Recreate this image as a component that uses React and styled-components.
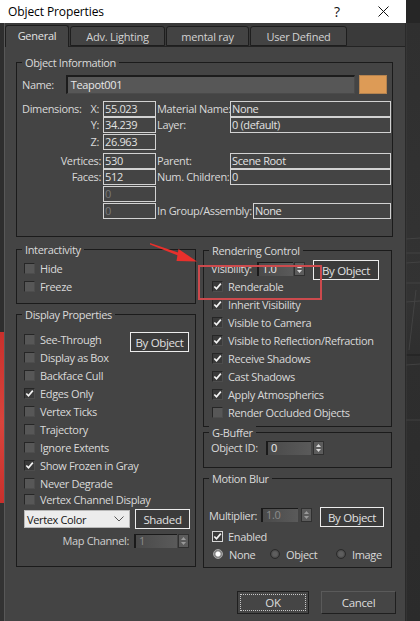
import React from 'react';
import styled, { createGlobalStyle } from 'styled-components';

const FONT = `"Open Sans", "Noto Sans", "DejaVu Sans", sans-serif`;

const Global = createGlobalStyle`
  html, body { margin: 0; padding: 0; background: #2c2c2c; }
  body { width: 420px; height: 621px; overflow: hidden; font-family: ${FONT}; }
  * { box-sizing: border-box; }
`;

const Screen = styled.div`
  position: relative;
  display: flex;
  width: 420px;
  height: 621px;
  overflow: hidden;
`;

const Dialog = styled.div`
  width: 406px;
  display: flex;
  flex-direction: column;
`;

const TitleBar = styled.div`
  height: 23px;
  background: #ffffff;
  display: flex;
  align-items: center;
  padding-left: 8px;
  color: #000;
  font-size: 12px;
  letter-spacing: -0.1px;
`;

const TitleText = styled.span`
  flex: 1;
`;

const TitleBtn = styled.div`
  width: 46px;
  height: 23px;
  display: flex;
  align-items: center;
  justify-content: center;
  font-size: 14px;
  color: #111;
`;

const Body = styled.div`
  flex: 1;
  display: flex;
`;

const LeftEdge = styled.div`
  width: 4px;
  background: linear-gradient(
    to bottom,
    #2e2e2e 0px,
    #2e2e2e 309px,
    #c9302c 309px,
    #d8443c 400px,
    #c9302c 480px,
    #333 480px,
    #333 100%
  );
`;

const Main = styled.div`
  flex: 1;
  display: flex;
  flex-direction: column;
  border-left: 1px solid #585858;
  border-right: 1px solid #2a2a2a;
  background: #444444;
`;

const TabStrip = styled.div`
  height: 24px;
  display: flex;
  align-items: flex-end;
  gap: 1px;
  background: #3a3a3a;
  border-bottom: 1px solid #232323;
`;

const Tab = styled.div`
  width: ${(p) => p.$w}px;
  height: ${(p) => (p.$active ? 22 : 20)}px;
  margin-bottom: ${(p) => (p.$active ? -1 : 0)}px;
  background: ${(p) => (p.$active ? '#444444' : '#434343')};
  border: 1px solid #1e1e1e;
  border-bottom: ${(p) => (p.$active ? 'none' : '1px solid #1e1e1e')};
  border-radius: 3px 3px 0 0;
  display: flex;
  align-items: center;
  justify-content: center;
  font-size: 11px;
  letter-spacing: -0.25px;
  color: ${(p) => (p.$active ? '#e2e2e2' : '#d2d2d2')};
  padding-bottom: ${(p) => (p.$active ? 2 : 0)}px;
`;

const Panel = styled.div`
  flex: 1;
  display: flex;
  flex-direction: column;
  padding: 14px 0 0 11px;
  color: #d9d9d9;
  font-size: 11px;
  letter-spacing: -0.35px;
`;

const Group = styled.div`
  width: ${(p) => p.$w}px;
  height: ${(p) => p.$h}px;
  margin-top: ${(p) => p.$mt || 0}px;
  border: 1px solid #1b1b1b;
  padding: 0 5px;
  display: flex;
  flex-direction: column;
`;

const Legend = styled.div`
  align-self: flex-start;
  margin-top: -8px;
  padding: 0 3px;
  background: #444444;
  line-height: 15px;
  color: #dadada;
`;

const NameRow = styled.div`
  display: flex;
  align-items: center;
  margin-top: 5px;
  height: 19px;
`;

const NameLabel = styled.span`
  width: 44px;
`;

const NameInput = styled.div`
  width: 291px;
  height: 19px;
  background: #575757;
  border-top: 2px solid #1c1c1c;
  border-left: 2px solid #1c1c1c;
  border-bottom: 1px solid #4a4a4a;
  border-right: 1px solid #4a4a4a;
  padding-left: 3px;
  line-height: 16px;
  color: #e8e8e8;
`;

const Swatch = styled.div`
  width: 28px;
  height: 19px;
  margin-left: 4px;
  background: #dd9b56;
  border: 1px solid #b5834f;
`;

const InfoGrid = styled.div`
  margin-top: 7px;
  display: grid;
  grid-template-columns: 81px 53px 74px 161px;
  grid-template-rows: 16px 17px 19px 16px 17px 17px 16px;
  align-items: start;
`;

const RowLabel = styled.div`
  line-height: 16px;
  display: flex;
  justify-content: ${(p) => (p.$split ? 'space-between' : 'flex-end')};
  padding-right: ${(p) => (p.$pr != null ? p.$pr : 4)}px;
`;

const MidLabel = styled.div`
  line-height: 16px;
  padding-left: 1px;
  white-space: nowrap;
`;

const Field = styled.div`
  height: 16px;
  width: ${(p) => (p.$w ? `${p.$w}px` : 'auto')};
  margin-left: ${(p) => (p.$push ? 'auto' : '0')};
  border: 1px solid #d2d2d2;
  padding-left: 1px;
  line-height: 14px;
  color: ${(p) => (p.$dim ? '#7a7a7a' : '#e2e2e2')};
  white-space: nowrap;
  overflow: hidden;
`;

const GroupAssembly = styled.div`
  grid-column: 3 / 5;
  display: flex;
  align-items: flex-start;
`;

const Columns = styled.div`
  display: flex;
  gap: 7px;
  margin-top: 12px;
`;

const Col = styled.div`
  display: flex;
  flex-direction: column;
  width: ${(p) => p.$w}px;
  padding-top: ${(p) => p.$pt || 0}px;
`;

const CheckRow = styled.div`
  display: flex;
  align-items: center;
  gap: 5px;
  height: ${(p) => p.$h || 18}px;
  margin-top: ${(p) => p.$mt || 0}px;
  padding-left: ${(p) => p.$pl || 0}px;
  white-space: nowrap;
`;

const Box = styled.div`
  width: 11px;
  height: 11px;
  flex: none;
  display: flex;
  align-items: center;
  justify-content: center;
  background: ${(p) => (p.$checked ? '#3a3a3a' : '#575757')};
  border: 1px solid ${(p) => (p.$focus ? '#d6d6d6' : '#262626')};
  border-right-color: ${(p) => (p.$focus ? '#d6d6d6' : '#4d4d4d')};
  border-bottom-color: ${(p) => (p.$focus ? '#d6d6d6' : '#4d4d4d')};
`;

const Check = ({ checked, focus }) => (
  <Box $checked={checked} $focus={focus}>
    {checked && (
      <svg width="9" height="9" viewBox="0 0 9 9">
        <path d="M1.3 4.5 L3.5 6.8 L7.8 1.6" fill="none" stroke="#f4f4f4" strokeWidth="1.7" />
      </svg>
    )}
  </Box>
);

const CheckItem = ({ label, checked, focus, ...rest }) => (
  <CheckRow {...rest}>
    <Check checked={checked} focus={focus} />
    <span>{label}</span>
  </CheckRow>
);

const TopRow = styled.div`
  display: flex;
  justify-content: space-between;
  align-items: flex-start;
  height: 18px;
  margin-top: ${(p) => p.$mt || 0}px;
  padding-right: 1px;
`;

const Button = styled.div`
  width: ${(p) => p.$w}px;
  height: 20px;
  margin-top: ${(p) => p.$mt || 0}px;
  margin-left: ${(p) => p.$ml || 0}px;
  flex: none;
  border: 1px solid #ececec;
  background: #3b3b3b;
  display: flex;
  align-items: center;
  justify-content: center;
  color: #e0e0e0;
  font-size: 11.5px;
`;

const ComboRow = styled.div`
  display: flex;
  align-items: center;
  gap: 5px;
  height: 20px;
  margin-top: 3px;
  padding-left: 2px;
`;

const Combo = styled.div`
  width: 106px;
  height: 18px;
  background: #ececec;
  border: 1px solid #b8b8b8;
  color: #141414;
  display: flex;
  align-items: center;
  justify-content: space-between;
  padding: 0 5px 0 2px;
`;

const MapRow = styled.div`
  display: flex;
  align-items: center;
  height: 15px;
  margin-top: 4px;
  padding-left: 2px;
`;

const MapLabel = styled.span`
  width: 110px;
  text-align: right;
  padding-right: 5px;
  color: #cfcfcf;
`;

const SpinWrap = styled.div`
  display: flex;
  align-items: center;
  gap: ${(p) => p.$gap || 1}px;
  margin-top: ${(p) => p.$mt || 0}px;
  flex: none;
`;

const SpinField = styled.div`
  width: ${(p) => p.$w}px;
  height: 14px;
  background: linear-gradient(to right, #4a4a4a, #5a5a5a);
  border-top: 1px solid #1a1a1a;
  border-left: 2px solid #1a1a1a;
  padding-left: 3px;
  line-height: 12px;
  color: ${(p) => (p.$dim ? '#8c8c8c' : '#ececec')};
`;

const SpinArrows = styled.div`
  width: 11px;
  height: 14px;
  background: #5c5c5c;
  border: 1px solid #303030;
  display: flex;
  align-items: center;
  justify-content: center;
`;

const Spinner = ({ value, w, dim, gap, mt }) => (
  <SpinWrap $gap={gap} $mt={mt}>
    <SpinField $w={w} $dim={dim}>
      {value}
    </SpinField>
    <SpinArrows>
      <svg width="9" height="12" viewBox="0 0 9 12">
        <path d="M2 5 L4.5 2 L7 5 Z" fill={dim ? '#9a9a9a' : '#d8d8d8'} />
        <path d="M2 7 L4.5 10 L7 7 Z" fill={dim ? '#9a9a9a' : '#d8d8d8'} />
      </svg>
    </SpinArrows>
  </SpinWrap>
);

const CtrlRow = styled.div`
  display: flex;
  align-items: ${(p) => p.$align || 'flex-start'};
  height: ${(p) => p.$h || 18}px;
  margin-top: ${(p) => p.$mt || 0}px;
  padding-left: ${(p) => p.$pl || 0}px;
`;

const CtrlLabel = styled.span`
  width: ${(p) => p.$w}px;
  line-height: ${(p) => p.$lh || 20}px;
  flex: none;
`;

const RadioRow = styled.div`
  display: flex;
  align-items: center;
  height: 18px;
  padding-left: 4px;
`;

const RadioItem = styled.div`
  width: ${(p) => p.$w}px;
  display: flex;
  align-items: center;
  gap: 6px;
`;

const Radio = styled.div`
  width: 10px;
  height: 10px;
  border-radius: 50%;
  flex: none;
  border: 1px solid ${(p) => (p.$on ? '#a8a8a8' : '#2a2a2a')};
  background: ${(p) =>
    p.$on
      ? 'radial-gradient(circle, #ffffff 0 2px, #8a8a8a 3px, #6a6a6a 5px)'
      : 'radial-gradient(circle, #5e5e5e 0 2px, #474747 4px)'};
`;

const ButtonRow = styled.div`
  display: flex;
  gap: 12px;
  margin-top: 23px;
  padding-left: 221px;
`;

const DlgButton = styled.div`
  width: ${(p) => p.$w}px;
  height: 23px;
  border: 1px solid #1f1f1f;
  border-top-color: ${(p) => (p.$default ? '#1f1f1f' : '#5a5a5a')};
  border-left-color: ${(p) => (p.$default ? '#1f1f1f' : '#5a5a5a')};
  background: #454545;
  padding: 2px;
  color: #dcdcdc;
  font-size: 11.5px;
`;

const DlgButtonInner = styled.div`
  height: 100%;
  border: 1px dotted ${(p) => (p.$focus ? '#c8c8c8' : 'transparent')};
  display: flex;
  align-items: center;
  justify-content: center;
`;

const RightStrip = styled.div`
  flex: 1;
  background: linear-gradient(to bottom, #262626 0, #262626 23px, #2f2f2f 23px, #333 300px, #2e2e2e 360px, #2b2b2b 100%);
`;

const Highlight = styled.div`
  position: absolute;
  left: 198px;
  top: 265px;
  width: 124px;
  height: 35px;
  border: 2px solid #cc4a4d;
  pointer-events: none;
`;

const ArrowSvg = styled.svg`
  position: absolute;
  left: 140px;
  top: 236px;
  pointer-events: none;
`;

const LineSvg = styled.svg`
  position: absolute;
  left: 406px;
  top: 0;
  pointer-events: none;
`;

export default function App() {
  return (
    <>
      <Global />
      <Screen>
        <Dialog>
          <TitleBar>
            <TitleText>Object Properties</TitleText>
            <TitleBtn>?</TitleBtn>
            <TitleBtn>
              <svg width="11" height="11" viewBox="0 0 11 11">
                <path d="M0.5 0.5 L10.5 10.5 M10.5 0.5 L0.5 10.5" stroke="#111" strokeWidth="1" />
              </svg>
            </TitleBtn>
          </TitleBar>
          <Body>
            <LeftEdge />
            <Main>
              <TabStrip>
                <Tab $w={64} $active>General</Tab>
                <Tab $w={95}>Adv. Lighting</Tab>
                <Tab $w={83}>mental ray</Tab>
                <Tab $w={97}>User Defined</Tab>
              </TabStrip>
              <Panel>
                <Group $w={377} $h={175} $mt={1}>
                  <Legend>Object Information</Legend>
                  <NameRow>
                    <NameLabel>Name:</NameLabel>
                    <NameInput>Teapot001</NameInput>
                    <Swatch />
                  </NameRow>
                  <InfoGrid>
                    <RowLabel $split>
                      <span>Dimensions:</span>
                      <span>X:</span>
                    </RowLabel>
                    <Field>55.023</Field>
                    <MidLabel>Material Name:</MidLabel>
                    <Field>None</Field>

                    <RowLabel>Y:</RowLabel>
                    <Field>34.239</Field>
                    <MidLabel>Layer:</MidLabel>
                    <Field>0 (default)</Field>

                    <RowLabel>Z:</RowLabel>
                    <Field>26.963</Field>
                    <span />
                    <span />

                    <RowLabel $pr={2}>Vertices:</RowLabel>
                    <Field>530</Field>
                    <MidLabel>Parent:</MidLabel>
                    <Field>Scene Root</Field>

                    <RowLabel $pr={2}>Faces:</RowLabel>
                    <Field>512</Field>
                    <MidLabel>Num. Children:</MidLabel>
                    <Field>0</Field>

                    <span />
                    <Field $dim>0</Field>
                    <span />
                    <span />

                    <span />
                    <Field $dim>0</Field>
                    <GroupAssembly>
                      <MidLabel>In Group/Assembly:</MidLabel>
                      <Field $w={138} $push>None</Field>
                    </GroupAssembly>
                  </InfoGrid>
                </Group>

                <Columns>
                  <Col $w={180}>
                    <Group $w={180} $h={55}>
                      <Legend>Interactivity</Legend>
                      <CheckItem label="Hide" $mt={2} $pl={2} />
                      <CheckItem label="Freeze" $pl={2} />
                    </Group>
                    <Group $w={180} $h={253} $mt={10}>
                      <Legend>Display Properties</Legend>
                      <TopRow $mt={8}>
                        <CheckItem label="See-Through" $pl={2} />
                        <Button $w={59} $mt={2}>By Object</Button>
                      </TopRow>
                      <CheckItem label="Display as Box" $pl={2} />
                      <CheckItem label="Backface Cull" $pl={2} />
                      <CheckItem label="Edges Only" checked $pl={2} />
                      <CheckItem label="Vertex Ticks" $pl={2} />
                      <CheckItem label="Trajectory" $pl={2} />
                      <CheckItem label="Ignore Extents" $pl={2} />
                      <CheckItem label="Show Frozen in Gray" checked $pl={2} />
                      <CheckItem label="Never Degrade" $pl={2} />
                      <CheckItem label="Vertex Channel Display" $pl={2} $h={14} />
                      <ComboRow>
                        <Combo>
                          <span>Vertex Color</span>
                          <svg width="10" height="6" viewBox="0 0 10 6">
                            <path d="M0.5 0.5 L5 5 L9.5 0.5" fill="none" stroke="#555" strokeWidth="1" />
                          </svg>
                        </Combo>
                        <Button $w={55}>Shaded</Button>
                      </ComboRow>
                      <MapRow>
                        <MapLabel>Map Channel:</MapLabel>
                        <Spinner value="1" w={43} dim gap={1} />
                      </MapRow>
                    </Group>
                  </Col>

                  <Col $w={189} $pt={1}>
                    <Group $w={189} $h={177}>
                      <Legend>Rendering Control</Legend>
                      <CtrlRow $mt={1} $pl={2}>
                        <CtrlLabel $w={46}>Visibility:</CtrlLabel>
                        <Spinner value="1.0" w={36} mt={3} />
                        <Button $w={66} $mt={1} $ml={8}>By Object</Button>
                      </CtrlRow>
                      <CheckItem label="Renderable" checked $pl={3} />
                      <CheckItem label="Inherit Visibility" checked $pl={3} />
                      <CheckItem label="Visible to Camera" checked $pl={3} />
                      <CheckItem label="Visible to Reflection/Refraction" checked $pl={3} />
                      <CheckItem label="Receive Shadows" checked $pl={3} />
                      <CheckItem label="Cast Shadows" checked $pl={3} />
                      <CheckItem label="Apply Atmospherics" checked $pl={3} />
                      <CheckItem label="Render Occluded Objects" $pl={3} />
                    </Group>
                    <Group $w={189} $h={36} $mt={5}>
                      <Legend>G-Buffer</Legend>
                      <CtrlRow $mt={1} $pl={2} $h={14} $align="center">
                        <CtrlLabel $w={55} $lh={14}>Object ID:</CtrlLabel>
                        <Spinner value="0" w={45} gap={2} />
                      </CtrlRow>
                    </Group>
                    <Group $w={189} $h={90} $mt={10}>
                      <Legend>Motion Blur</Legend>
                      <CtrlRow $mt={20}>
                        <CtrlLabel $w={52}>Multiplier:</CtrlLabel>
                        <Spinner value="1.0" w={37} dim mt={2} gap={3} />
                        <Button $w={64} $mt={1} $ml={8}>By Object</Button>
                      </CtrlRow>
                      <CheckItem label="Enabled" checked focus $mt={3} $pl={3} />
                      <RadioRow>
                        <RadioItem $w={57}>
                          <Radio $on />
                          <span>None</span>
                        </RadioItem>
                        <RadioItem $w={66}>
                          <Radio />
                          <span>Object</span>
                        </RadioItem>
                        <RadioItem $w={50}>
                          <Radio />
                          <span>Image</span>
                        </RadioItem>
                      </RadioRow>
                    </Group>
                  </Col>
                </Columns>

                <ButtonRow>
                  <DlgButton $w={72} $default>
                    <DlgButtonInner $focus>OK</DlgButtonInner>
                  </DlgButton>
                  <DlgButton $w={75}>
                    <DlgButtonInner>Cancel</DlgButtonInner>
                  </DlgButton>
                </ButtonRow>
              </Panel>
            </Main>
          </Body>
        </Dialog>
        <RightStrip />

        <Highlight />
        <ArrowSvg width="62" height="30" viewBox="0 0 62 30">
          <polygon points="10,7 41,17.5 40.5,20.5 10,8.5" fill="#e8302c" />
          <polygon points="57,25.5 38.5,13 36.5,25" fill="#e8302c" />
        </ArrowSvg>
        <LineSvg width="14" height="621" viewBox="0 0 14 621">
          <g stroke="#4a4a4a" strokeWidth="1" opacity="0.7">
            <line x1="0" y1="239" x2="14" y2="238" />
            <line x1="0" y1="253" x2="14" y2="253" />
            <line x1="0" y1="263" x2="14" y2="262" />
            <line x1="0" y1="283" x2="14" y2="283" />
            <line x1="0" y1="302" x2="14" y2="301" />
            <line x1="10" y1="290" x2="3" y2="350" />
            <line x1="0" y1="365" x2="14" y2="364" />
            <line x1="0" y1="420" x2="14" y2="420" />
          </g>
          <line x1="0" y1="355" x2="14" y2="355" stroke="#1e1e1e" strokeWidth="1" />
          <line x1="0" y1="23" x2="0" y2="621" stroke="#3c3c3c" strokeWidth="1" />
        </LineSvg>
      </Screen>
    </>
  );
}
